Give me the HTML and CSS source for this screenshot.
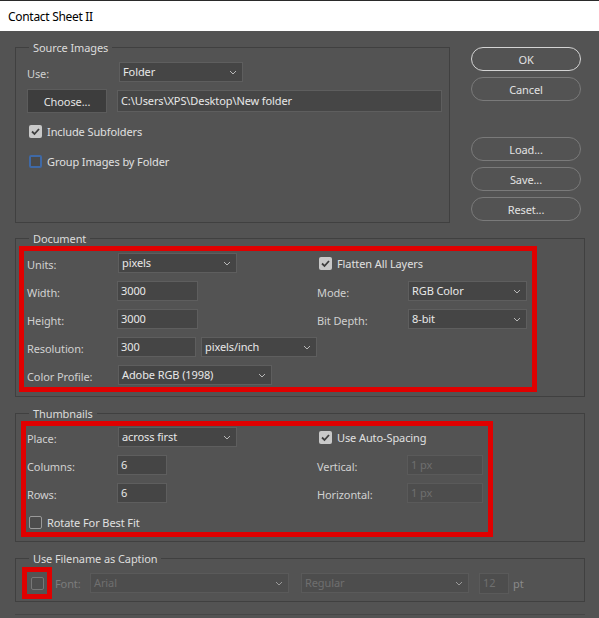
FILE: index.html
```html
<!DOCTYPE html>
<html lang="en">
<head>
<meta charset="UTF-8" />
<title>Contact Sheet II</title>
<link rel="stylesheet" href="styles.css">
</head>
<body>
<div class="window">
  <div class="titlebar">Contact Sheet II</div>

  <div class="dialog">
    <div class="top">
      <section class="group source">
        <span class="legend">Source Images</span>
        <div class="row">
          <span class="lbl">Use:</span>
          <div class="select w-folder"><span>Folder</span><svg class="chev" viewBox="0 0 8 5"><polyline points="1,1 4,4 7,1"/></svg></div>
        </div>
        <div class="row row-choose">
          <button class="btn-flat">Choose...</button>
          <div class="field path">C:\Users\XPS\Desktop\New folder</div>
        </div>
        <div class="check-row first">
          <span class="cb checked"><svg viewBox="0 0 13 13"><polyline points="3,6.5 5.5,9 10,4"/></svg></span>
          <span>Include Subfolders</span>
        </div>
        <div class="check-row second">
          <span class="cb focus"></span>
          <span>Group Images by Folder</span>
        </div>
      </section>

      <div class="actions">
        <button class="pill default">OK</button>
        <button class="pill">Cancel</button>
        <button class="pill spaced">Load...</button>
        <button class="pill">Save...</button>
        <button class="pill">Reset...</button>
      </div>
    </div>

    <!-- Document -->
    <section class="group document">
      <span class="legend">Document</span>
      <div class="mark mark-doc">
        <div class="row">
          <span class="lbl">Units:</span>
          <div class="ctl"><div class="select w-119"><span>pixels</span><svg class="chev" viewBox="0 0 8 5"><polyline points="1,1 4,4 7,1"/></svg></div></div>
          <div class="rlbl">
            <span class="cb checked"><svg viewBox="0 0 13 13"><polyline points="3,6.5 5.5,9 10,4"/></svg></span>
            <span class="cb-text">Flatten All Layers</span>
          </div>
        </div>
        <div class="row">
          <span class="lbl">Width:</span>
          <div class="ctl"><div class="field w-81">3000</div></div>
          <span class="rlbl">Mode:</span>
          <div class="select w-119 r"><span>RGB Color</span><svg class="chev" viewBox="0 0 8 5"><polyline points="1,1 4,4 7,1"/></svg></div>
        </div>
        <div class="row">
          <span class="lbl">Height:</span>
          <div class="ctl"><div class="field w-81">3000</div></div>
          <span class="rlbl">Bit Depth:</span>
          <div class="select w-119 r"><span>8-bit</span><svg class="chev" viewBox="0 0 8 5"><polyline points="1,1 4,4 7,1"/></svg></div>
        </div>
        <div class="row">
          <span class="lbl">Resolution:</span>
          <div class="ctl">
            <div class="field w-81">300</div>
            <div class="select w-119 unit"><span>pixels/inch</span><svg class="chev" viewBox="0 0 8 5"><polyline points="1,1 4,4 7,1"/></svg></div>
          </div>
        </div>
        <div class="row">
          <span class="lbl">Color Profile:</span>
          <div class="ctl"><div class="select w-154"><span>Adobe RGB (1998)</span><svg class="chev" viewBox="0 0 8 5"><polyline points="1,1 4,4 7,1"/></svg></div></div>
        </div>
      </div>
    </section>

    <!-- Thumbnails -->
    <section class="group thumbs">
      <span class="legend">Thumbnails</span>
      <div class="mark mark-thumbs">
        <div class="row">
          <span class="lbl">Place:</span>
          <div class="ctl"><div class="select w-119"><span>across first</span><svg class="chev" viewBox="0 0 8 5"><polyline points="1,1 4,4 7,1"/></svg></div></div>
          <div class="rlbl">
            <span class="cb checked"><svg viewBox="0 0 13 13"><polyline points="3,6.5 5.5,9 10,4"/></svg></span>
            <span class="cb-text">Use Auto-Spacing</span>
          </div>
        </div>
        <div class="row">
          <span class="lbl">Columns:</span>
          <div class="ctl"><div class="field w-50">6</div></div>
          <span class="rlbl">Vertical:</span>
          <div class="field w-76 off">1 px</div>
        </div>
        <div class="row">
          <span class="lbl">Rows:</span>
          <div class="ctl"><div class="field w-50">6</div></div>
          <span class="rlbl">Horizontal:</span>
          <div class="field w-76 off">1 px</div>
        </div>
        <div class="row last">
          <span class="cb plain"></span>
          <span class="cb-text">Rotate For Best Fit</span>
        </div>
      </div>
    </section>

    <!-- Caption -->
    <section class="group caption">
      <span class="legend">Use Filename as Caption</span>
      <div class="caption-row">
        <div class="mark mark-cb"><span class="cb off"></span></div>
        <span class="dim font-lbl">Font:</span>
        <div class="select off w-font"><span>Arial</span><svg class="chev" viewBox="0 0 8 5"><polyline points="1,1 4,4 7,1"/></svg></div>
        <div class="select off w-style"><span>Regular</span><svg class="chev" viewBox="0 0 8 5"><polyline points="1,1 4,4 7,1"/></svg></div>
        <div class="field off w-size">12</div>
        <span class="dim pt">pt</span>
      </div>
    </section>

    <div class="footer"></div>
  </div>
</div>
</body>
</html>
```

FILE: styles.css
```css
body {
  margin: 0;
  background: #535353;
  font-family: "Noto Sans", "Open Sans", sans-serif;
  font-size: 11px;
  letter-spacing: -0.1px;
  color: #d0d0d0;
}
.window {
  width: 599px;
  height: 618px;
  overflow: hidden;
}
.titlebar {
  height: 30px;
  line-height: 31px;
  border-top: 1px solid #2a2a2a;
  background: #fff;
  color: #000;
  padding-left: 8px;
  font-size: 12px;
  letter-spacing: -0.3px;
}
.dialog {
  padding: 16px 14px 0 15px;
}
.top {
  display: flex;
  align-items: flex-start;
}

/* group boxes */
.group {
  position: relative;
  box-sizing: border-box;
  border: 1px solid #404040;
}
.legend {
  position: absolute;
  top: -7px;
  left: 13px;
  padding: 0 4px;
  line-height: 14px;
  background: #535353;
  color: #dcdcdc;
}
.source {
  width: 435px;
  height: 176px;
  padding: 14px 0 0 11px;
}
.document {
  margin-top: 15px;
  padding: 7px 0 4px 3px;
}
.thumbs {
  margin-top: 16px;
  padding: 7px 0 4px 5px;
}
.caption {
  margin-top: 16px;
  padding: 8px 0 2px 6px;
}
.footer {
  margin-top: 12px;
  border-top: 1px solid #464646;
}

/* red annotation frames */
.mark {
  box-sizing: border-box;
  border: 5px solid #e00000;
}
.mark-doc {
  width: 518px;
  height: 146px;
  padding: 2px 0 0 3px;
  display: flex;
  flex-direction: column;
  gap: 8px;
}
.mark-thumbs {
  width: 472px;
  height: 116px;
  padding: 1px 0 0 1px;
  display: flex;
  flex-direction: column;
  gap: 8px;
}
.mark-cb {
  width: 30px;
  height: 32px;
  display: flex;
  align-items: center;
  justify-content: center;
}

/* rows */
.row {
  display: flex;
  align-items: center;
  height: 20px;
}
.row.last {
  margin-top: 2px;
}
.row.last .cb {
  margin-left: 2px;
}
.lbl {
  width: 90px;
  padding-top: 3px;
  flex-shrink: 0;
}
.source .lbl {
  width: 91px;
}
.ctl {
  width: 200px;
  display: flex;
  align-items: center;
  flex-shrink: 0;
}
.rlbl {
  width: 90px;
  padding-top: 3px;
  display: flex;
  align-items: center;
  flex-shrink: 0;
}
.mark-doc .rlbl {
  width: 91px;
}
.rlbl .cb {
  margin-left: 2px;
  margin-top: -3px;
}
.cb-text {
  margin-left: 5px;
  color: #e0e0e0;
  white-space: nowrap;
}
.rlbl .cb-text {
  margin-top: -3px;
}

/* controls */
.select, .field {
  box-sizing: border-box;
  height: 20px;
  background: #454545;
  border: 1px solid #5e5e5e;
  color: #e8e8e8;
  line-height: 18px;
  padding: 0 5px 0 3px;
  white-space: nowrap;
}
.select {
  display: flex;
  align-items: center;
  justify-content: space-between;
  margin-left: 1px;
}
.select.r {
  margin-left: 0;
}
.chev {
  width: 8px;
  height: 5px;
  fill: none;
  stroke: #b8b8b8;
  stroke-width: 1;
}
.w-folder { width: 124px; }
.w-119 { width: 119px; }
.w-154 { width: 154px; }
.w-81 { width: 81px; }
.w-50 { width: 50px; }
.w-76 { width: 76px; }
.select.unit {
  margin-left: 5px;
}
.field.off, .select.off {
  background: #4d4d4d;
  border-color: #5a5a5a;
  color: #6f6f6f;
}
.select.off .chev {
  stroke: #9a9a9a;
}

.row-choose {
  height: 24px;
  margin-top: 7px;
}
.btn-flat {
  box-sizing: border-box;
  width: 80px;
  height: 24px;
  background: #3d3d3d;
  border: 1px solid #5c5c5c;
  color: #e4e4e4;
  font: inherit;
  letter-spacing: inherit;
  padding: 0;
}
.field.path {
  width: 325px;
  height: 22px;
  line-height: 20px;
  margin-left: 10px;
  background: #464646;
}

/* checkboxes */
.check-row {
  display: flex;
  align-items: center;
  height: 21px;
  color: #e0e0e0;
}
.check-row.first { margin-top: 8px; }
.check-row.second { margin-top: 9px; }
.check-row .cb {
  margin: 0 5px 0 2px;
}
.cb {
  box-sizing: border-box;
  width: 13px;
  height: 13px;
  border-radius: 2px;
  flex-shrink: 0;
  display: inline-block;
}
.cb svg {
  display: block;
  width: 13px;
  height: 13px;
  fill: none;
  stroke: #3e3e3e;
  stroke-width: 1.8;
}
.cb.checked {
  background: #c9c9c9;
}
.cb.plain {
  border: 1px solid #9a9a9a;
  background: #4c4c4c;
}
.cb.focus {
  border: 2px solid #3f69a6;
  background: #4a4a4a;
}
.cb.off {
  border: 1px solid #777;
  background: #4e4e4e;
}

/* caption row */
.caption-row {
  display: flex;
  align-items: center;
}
.dim {
  color: #7c7c7c;
}
.font-lbl {
  width: 35px;
  margin-left: 3px;
}
.w-font { width: 199px; margin-left: 0; }
.w-style { width: 168px; margin-left: 12px; }
.field.w-size {
  width: 30px;
  height: 21px;
  margin-left: 10px;
}
.pt {
  margin-left: 4px;
  color: #8a8a8a;
}

/* right buttons */
.actions {
  margin-left: 21px;
  width: 110px;
  display: flex;
  flex-direction: column;
  gap: 6px;
}
.pill {
  box-sizing: border-box;
  height: 24px;
  border-radius: 12px;
  border: 1px solid #7a7a7a;
  background: transparent;
  color: #e2e2e2;
  font: inherit;
  letter-spacing: inherit;
  padding: 0;
}
.pill.default {
  border: 1.5px solid #d4d4d4;
}
.pill.spaced {
  margin-top: 30px;
}
```
